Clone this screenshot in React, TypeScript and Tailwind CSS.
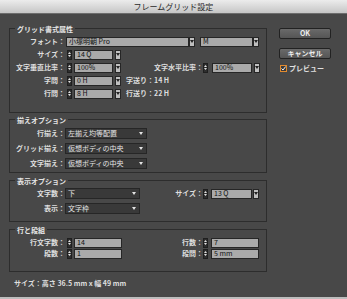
import React from "react";

const FONT = "font-['Noto_Sans_CJK_JP','Noto_Sans',sans-serif]";

function Spinner() {
  return (
    <div className="w-[5px] h-[10px] shrink-0 bg-[#2e2e2e] border border-[#1f1f1f] flex flex-col items-center justify-center gap-[1px]">
      <svg width="3" height="2" viewBox="0 0 3 2">
        <path d="M1.5 0L3 2H0z" fill="#e0e0e0" />
      </svg>
      <svg width="3" height="2" viewBox="0 0 3 2">
        <path d="M0 0H3L1.5 2z" fill="#e0e0e0" />
      </svg>
    </div>
  );
}

function ArrowBtn() {
  return (
    <div className="w-[6px] h-[10px] shrink-0 bg-[#bfbfbf] border border-[#262626] flex items-center justify-center">
      <svg width="4" height="3" viewBox="0 0 4 3">
        <path d="M0 0H4L2 3z" fill="#222" />
      </svg>
    </div>
  );
}

function Field({ className, text }: { className: string; text: string }) {
  return (
    <div
      className={
        "h-[10px] shrink-0 bg-[#aaaaaa] border border-[#262626] flex items-center pl-[2px] text-[7px] leading-none text-[#111] " +
        className
      }
    >
      {text}
    </div>
  );
}

function DarkDrop({ className, text }: { className: string; text: string }) {
  return (
    <div
      className={
        "h-[11px] shrink-0 bg-[#393939] border border-[#262626] flex items-center justify-between pl-[2px] pr-[3px] text-[7px] leading-none text-[#e4e4e4] " +
        className
      }
    >
      <span>{text}</span>
      <svg width="4" height="3" viewBox="0 0 4 3">
        <path d="M0 0H4L2 3z" fill="#e4e4e4" />
      </svg>
    </div>
  );
}

function Label({ className, text }: { className: string; text: string }) {
  return (
    <div
      className={
        "shrink-0 text-right text-[7px] leading-none font-bold text-[#dedede] whitespace-nowrap " +
        className
      }
    >
      {text}
    </div>
  );
}

function Group({
  title,
  className,
  children,
}: {
  title: string;
  className: string;
  children: React.ReactNode;
}) {
  return (
    <div className={"border border-[#2d2d2d] w-[258px] flex flex-col " + className}>
      <div className="-mt-[5px] ml-[5px] w-fit h-[10px] px-[2px] bg-[#484848] text-[7px] leading-[10px] font-bold text-[#e6e6e6]">
        {title}
      </div>
      {children}
    </div>
  );
}

export default function App() {
  return (
    <div className={"w-[347px] h-[299px] bg-[#484848] flex flex-col overflow-hidden " + FONT}>
      {/* title bar */}
      <div className="h-[14px] shrink-0 bg-gradient-to-b from-[#ececec] to-[#c6c6c6] border-b border-[#6d6d6d] flex items-center justify-center text-[8px] leading-none text-[#2a2a2a]">
        フレームグリッド設定
      </div>

      <div className="flex flex-1">
        {/* left column */}
        <div className="ml-[9px] pt-[14px] flex flex-col">
          <Group title="グリッド書式属性" className="h-[85px]">
            <div className="mt-[1px] h-[13px] flex items-center">
              <Label className="w-[55px]" text="フォント：" />
              <div className="ml-[1px] flex">
                <Field className="w-[123px]" text="小塚明朝 Pro" />
                <ArrowBtn />
              </div>
              <div className="ml-[5px] flex">
                <Field className="w-[53px]" text="M" />
                <ArrowBtn />
              </div>
            </div>
            <div className="h-[13px] flex items-center">
              <Label className="w-[55px]" text="サイズ：" />
              <div className="ml-[2px]"><Spinner /></div>
              <Field className="ml-[2px] w-[39px]" text="14 Q" />
              <div className="ml-[2px]"><ArrowBtn /></div>
            </div>
            <div className="h-[13px] flex items-center">
              <Label className="w-[55px]" text="文字垂直比率：" />
              <div className="ml-[2px]"><Spinner /></div>
              <Field className="ml-[2px] w-[39px]" text="100%" />
              <div className="ml-[2px]"><ArrowBtn /></div>
              <Label className="w-[82px]" text="文字水平比率：" />
              <Spinner />
              <Field className="ml-[4px] w-[40px]" text="100%" />
              <div className="ml-[2px]"><ArrowBtn /></div>
            </div>
            <div className="h-[13px] flex items-center">
              <Label className="w-[55px]" text="字間：" />
              <div className="ml-[2px]"><Spinner /></div>
              <Field className="ml-[2px] w-[39px]" text="0 H" />
              <div className="ml-[2px]"><ArrowBtn /></div>
              <Label className="ml-[5px]" text="字送り：14 H" />
            </div>
            <div className="h-[13px] flex items-center">
              <Label className="w-[55px]" text="行間：" />
              <div className="ml-[2px]"><Spinner /></div>
              <Field className="ml-[2px] w-[39px]" text="8 H" />
              <div className="ml-[2px]"><ArrowBtn /></div>
              <Label className="ml-[5px]" text="行送り：22 H" />
            </div>
          </Group>

          <Group title="揃えオプション" className="mt-[6px] h-[54px]">
            <div className="mt-[1px] h-[15px] flex items-center">
              <Label className="w-[55px]" text="行揃え：" />
              <DarkDrop className="w-[82px]" text="左揃え均等配置" />
            </div>
            <div className="h-[15px] flex items-center">
              <Label className="w-[55px]" text="グリッド揃え：" />
              <DarkDrop className="w-[82px]" text="仮想ボディの中央" />
            </div>
            <div className="h-[15px] flex items-center">
              <Label className="w-[55px]" text="文字揃え：" />
              <DarkDrop className="w-[82px]" text="仮想ボディの中央" />
            </div>
          </Group>

          <Group title="表示オプション" className="mt-[7px] h-[42px]">
            <div className="h-[15px] flex items-center">
              <Label className="w-[55px]" text="文字数：" />
              <DarkDrop className="w-[75px]" text="下" />
              <Label className="w-[63px]" text="サイズ：" />
              <Spinner />
              <Field className="ml-[3px] w-[41px]" text="13 Q" />
              <div className="ml-[1px]"><ArrowBtn /></div>
            </div>
            <div className="h-[15px] flex items-center">
              <Label className="w-[55px]" text="表示：" />
              <DarkDrop className="w-[75px]" text="文字枠" />
            </div>
          </Group>

          <Group title="行と段組" className="mt-[7px] h-[43px]">
            <div className="mt-[2px] h-[11px] flex items-center">
              <Label className="w-[55px]" text="行文字数：" />
              <div className="ml-[2px]"><Spinner /></div>
              <Field className="ml-[2px] w-[48px]" text="14" />
              <Label className="w-[81px]" text="行数：" />
              <Spinner />
              <Field className="ml-[3px] w-[48px]" text="7" />
            </div>
            <div className="h-[11px] flex items-center">
              <Label className="w-[55px]" text="段数：" />
              <div className="ml-[2px]"><Spinner /></div>
              <Field className="ml-[2px] w-[48px]" text="1" />
              <Label className="w-[81px]" text="段間：" />
              <Spinner />
              <Field className="ml-[3px] w-[48px]" text="5 mm" />
            </div>
          </Group>

          <div className="mt-[6px] h-[10px] ml-[5px] flex items-center text-[7px] leading-none font-bold text-[#dedede]">
            サイズ：高さ 36.5 mm x 幅 49 mm
          </div>
        </div>

        {/* right column */}
        <div className="ml-[12px] pt-[14px] w-[52px] flex flex-col">
          <button className="h-[11px] w-[52px] rounded-[2px] border border-[#222] bg-gradient-to-b from-[#6a6a6a] to-[#555] text-[7px] leading-none font-bold text-[#ececec] flex items-center justify-center">
            OK
          </button>
          <button className="mt-[9px] h-[11px] w-[52px] rounded-[2px] border border-[#222] bg-gradient-to-b from-[#6a6a6a] to-[#555] text-[7px] leading-none font-bold text-[#ececec] flex items-center justify-center">
            キャンセル
          </button>
          <div className="mt-[6px] ml-[1px] flex items-center">
            <div className="w-[7px] h-[7px] border border-[#e38b2f] bg-[#3a3a3a] flex items-center justify-center">
              <svg width="5" height="5" viewBox="0 0 5 5">
                <path d="M0.5 2.5L2 4L4.7 0.5" stroke="#f2f2f2" strokeWidth="1" fill="none" />
              </svg>
            </div>
            <span className="ml-[2px] text-[7px] leading-none font-bold text-[#e0e0e0]">プレビュー</span>
          </div>
        </div>
      </div>
      <div className="h-[2px] shrink-0 bg-[#bdbdbd]" />
    </div>
  );
}
